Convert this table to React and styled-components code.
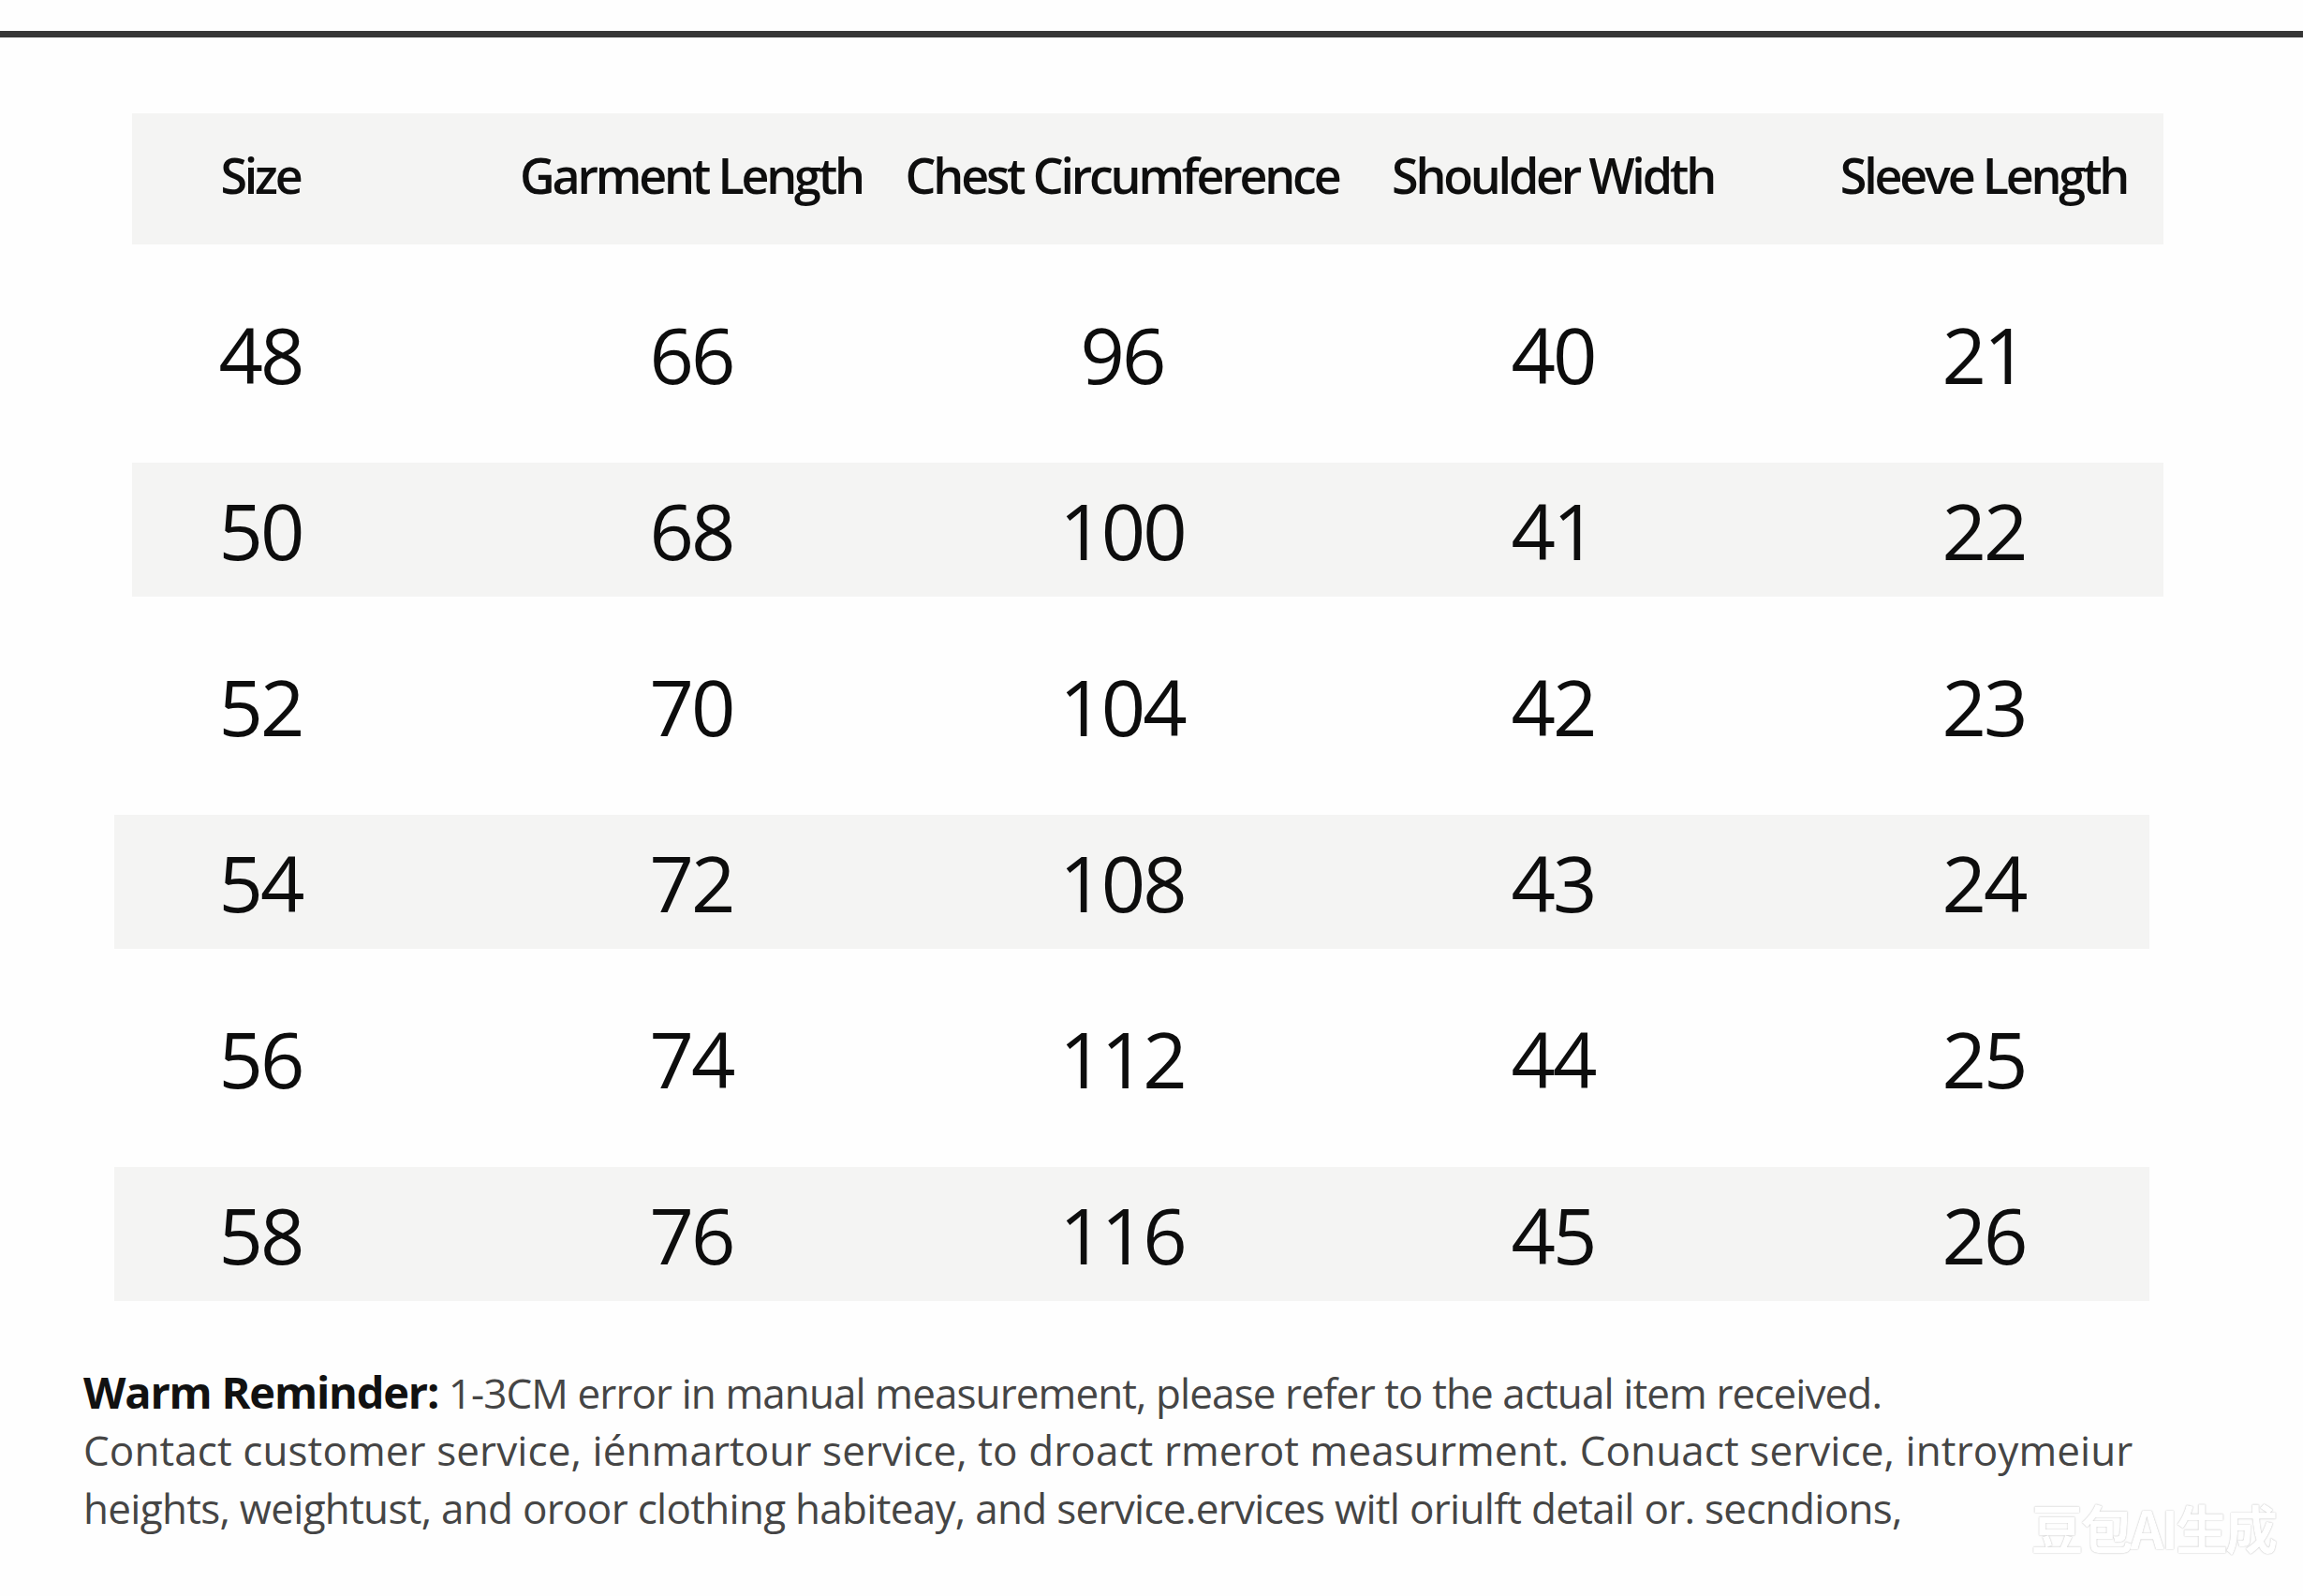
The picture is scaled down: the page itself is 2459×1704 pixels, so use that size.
import React from "react";
import styled, { createGlobalStyle } from "styled-components";

const Global = createGlobalStyle`
  html, body { margin: 0; padding: 0; background: #fefefe; }
  body { font-family: "Open Sans", "Noto Sans", sans-serif; }
`;

const Page = styled.div`
  position: relative;
  width: 2459px;
  min-height: 1704px;
  padding-top: 33px;
  box-sizing: border-box;
  overflow: hidden;
`;

const TopRule = styled.div`
  height: 7px;
  background: #363636;
`;

const Table = styled.div`
  margin-top: 81px;
  display: flex;
  flex-direction: column;
  gap: 45px;
`;

const Row = styled.div`
  display: grid;
  grid-template-columns: repeat(5, 274px);
  column-gap: 186px;
  align-items: center;
  justify-items: center;
  height: ${(p) => (p.$head ? 140 : 143)}px;
  margin-left: ${(p) => p.$left}px;
  width: ${(p) => p.$width}px;
  padding-left: ${(p) => 141 - p.$left}px;
  box-sizing: border-box;
  background: ${(p) => (p.$shade ? "#f4f4f3" : "transparent")};
`;

const HeadCell = styled.div`
  justify-self: center;
  text-align: center;
  font-size: 52px;
  font-weight: 600;
  letter-spacing: -3.2px;
  color: #0e0e0e;
  white-space: nowrap;
  line-height: 1;
  padding-bottom: 8px;
`;

const Cell = styled.div`
  justify-self: center;
  text-align: center;
  font-size: 83px;
  font-weight: 400;
  letter-spacing: -3px;
  color: #0d0d0d;
  line-height: 1;
`;

const Notes = styled.div`
  margin: 66px 0 0 89px;
  display: flex;
  flex-direction: column;
`;

const NoteLine = styled.p`
  margin: 0;
  height: 62px;
  line-height: 62px;
  font-size: 44px;
  color: #454545;
  letter-spacing: ${(p) => p.$track}px;
  white-space: nowrap;
`;

const Strong = styled.span`
  font-weight: 700;
  font-size: 47px;
  color: #111;
  letter-spacing: -1.2px;
`;

const Watermark = styled.div`
  position: absolute;
  right: 30px;
  bottom: 34px;
  font-family: "Noto Sans CJK SC", sans-serif;
  font-size: 56px;
  font-weight: 700;
  letter-spacing: -3px;
  color: #ffffff;
  text-shadow: 0 0 2px rgba(0, 0, 0, 0.18), 0 0 1px rgba(0, 0, 0, 0.2);
`;

const headers = ["Size", "Garment Length", "Chest Circumference", "Shoulder Width", "Sleeve Length"];

const rows = [
  { v: ["48", "66", "96", "40", "21"] },
  { v: ["50", "68", "100", "41", "22"], shade: true, left: 141, width: 2169 },
  { v: ["52", "70", "104", "42", "23"] },
  { v: ["54", "72", "108", "43", "24"], shade: true, left: 122, width: 2173 },
  { v: ["56", "74", "112", "44", "25"] },
  { v: ["58", "76", "116", "45", "26"], shade: true, left: 122, width: 2173 },
];

export default function App() {
  return (
    <>
      <Global />
      <Page>
        <TopRule />
        <Table>
          <Row $head $shade $left={141} $width={2169}>
            {headers.map((h) => (
              <HeadCell key={h}>{h}</HeadCell>
            ))}
          </Row>
          {rows.map((r, i) => (
            <Row key={i} $shade={r.shade} $left={r.left || 141} $width={r.width || 2169}>
              {r.v.map((n, j) => (
                <Cell key={j}>{n}</Cell>
              ))}
            </Row>
          ))}
        </Table>
        <Notes>
          <NoteLine $track={-0.9}>
            <Strong>Warm Reminder:</Strong> 1-3CM error in manual measurement, please refer to the actual item received.
          </NoteLine>
          <NoteLine $track={0.1}>
            Contact customer service, iénmartour service, to droact rmerot measurment. Conuact service, introymeiur
          </NoteLine>
          <NoteLine $track={-0.7}>
            heights, weightust, and oroor clothing habiteay, and service.ervices witl oriulft detail or. secndions,
          </NoteLine>
        </Notes>
        <Watermark>豆包AI生成</Watermark>
      </Page>
    </>
  );
}
